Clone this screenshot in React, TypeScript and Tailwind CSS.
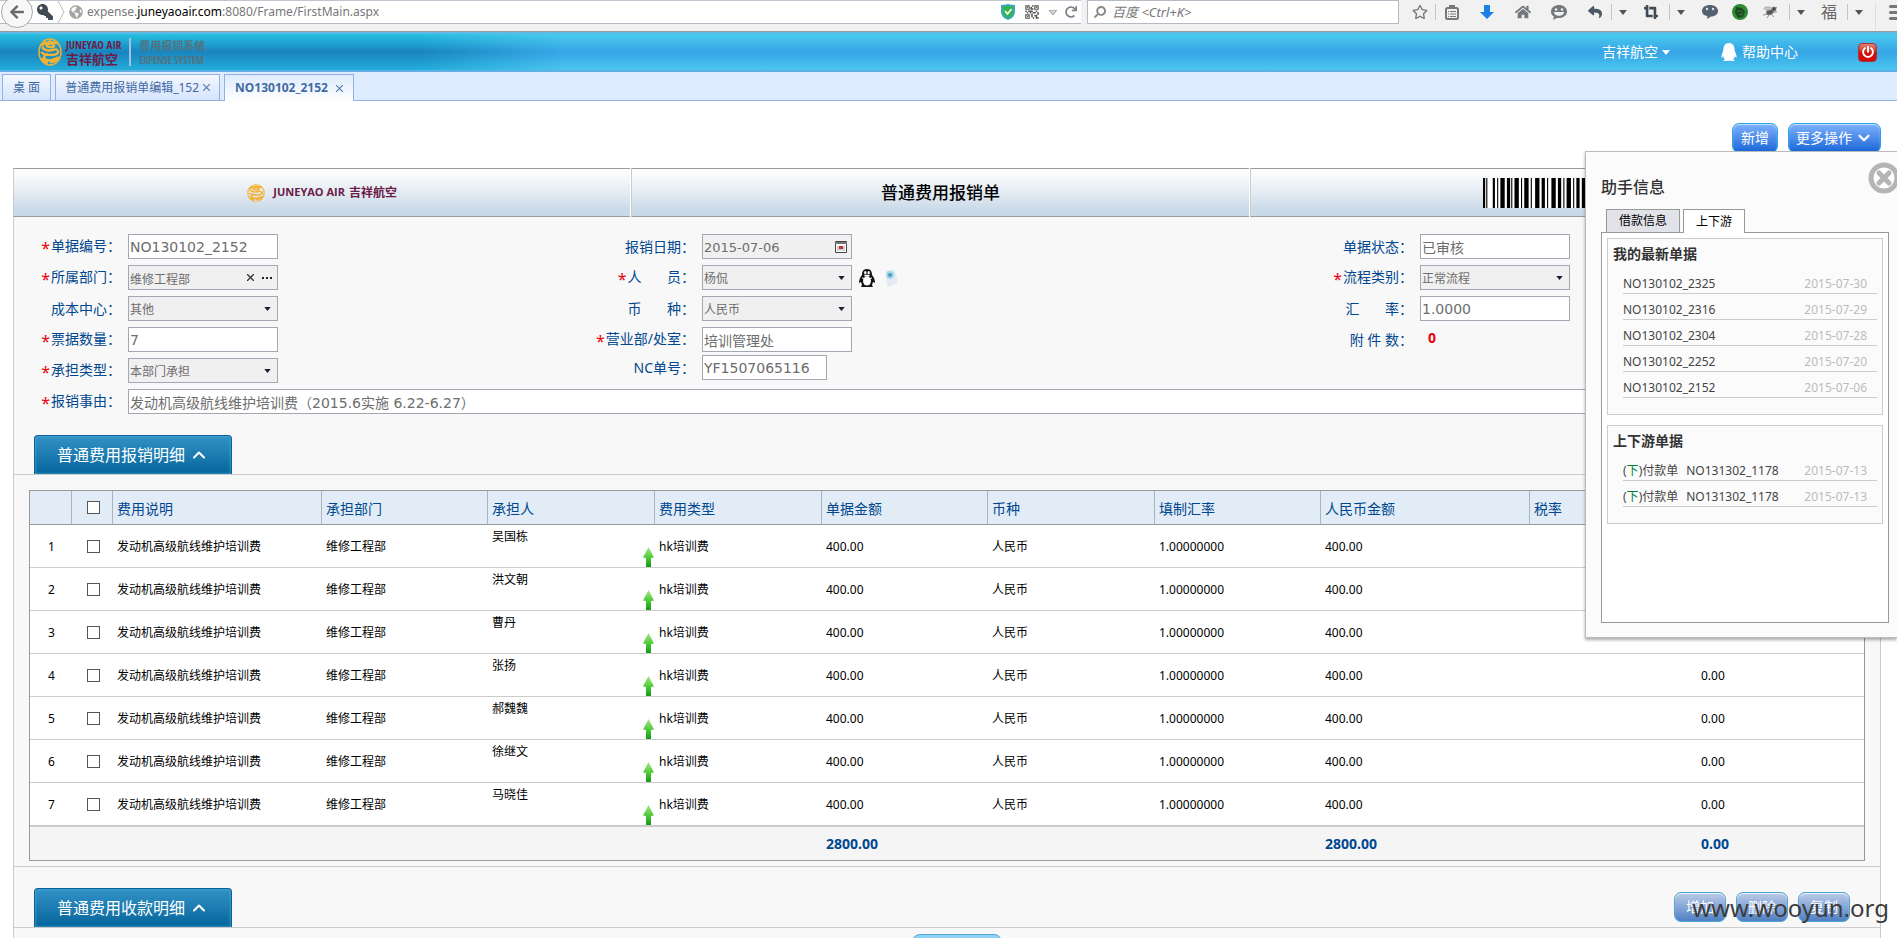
import { ChevronDown, ChevronUp } from 'lucide-react'
import { ReactNode } from 'react'
import {
  FaArrowLeft,
  FaCropAlt,
  FaGlobeAmericas,
  FaHome,
  FaKey,
  FaPowerOff,
  FaQq,
  FaRedo,
  FaRegStar,
  FaReply,
  FaSearch,
} from 'react-icons/fa'
import { MdQrCode2 } from 'react-icons/md'

const expenseRows = ['吴国栋', '洪文朝', '曹丹', '张扬', '郝魏魏', '徐继文', '马晓佳']

const columns = ['费用说明', '承担部门', '承担人', '费用类型', '单据金额', '币种', '填制汇率', '人民币金额', '税率', '']

const latestDocs = [
  { no: 'NO130102_2325', date: '2015-07-30' },
  { no: 'NO130102_2316', date: '2015-07-29' },
  { no: 'NO130102_2304', date: '2015-07-28' },
  { no: 'NO130102_2252', date: '2015-07-20' },
  { no: 'NO130102_2152', date: '2015-07-06' },
]

const relatedDocs = [
  { no: 'NO131302_1178', date: '2015-07-13' },
  { no: 'NO131302_1178', date: '2015-07-13' },
]

// bar, gap, bar, gap ... in module units
const barcode = [
  2, 1, 1, 5, 2, 2, 1, 2, 4, 2, 3, 1, 1, 2, 4, 2, 1, 2, 4, 2, 1, 3, 4, 2, 3, 2, 1, 3, 4, 2, 3, 2, 1, 2, 4, 2,
  1, 2, 3, 2, 4, 2, 2, 1, 1, 3, 4, 1, 2, 2, 1, 2, 4, 2, 1, 1, 3, 2, 1, 2, 4, 2, 2,
]

function Emblem({ className }: { className: string }) {
  return (
    <svg viewBox="0 0 24 28" preserveAspectRatio="none" className={className} fill="none" stroke="#f2b233" aria-hidden="true">
      <ellipse cx="12" cy="14" rx="11" ry="13" strokeWidth="1.5" />
      <path
        d="M19 6c-3-3-8-2-9 0 3-1 6 0 6 2s-6 1-8 0M4 9c2 3 6 4 10 3s5-1 6 1-2 4-6 4-8-1-8 2 4 4 8 3 5-3 7-2M3 14c2 2 4 3 7 2M4 20c1 2 3 4 6 5M8 4c-2 1-3 2-4 4M12 24c3 0 6-1 8-4M7 6c2 0 3-2 6-3"
        strokeWidth="2.4"
      />
    </svg>
  )
}

function ToolButton({ label, className, children }: { label: string; className: string; children: ReactNode }) {
  return (
    <button aria-label={label} className={`flex h-4 shrink-0 items-center justify-center ${className}`}>
      {children}
    </button>
  )
}

function Caret({ className = 'fill-[#555]' }: { className?: string }) {
  return (
    <svg viewBox="0 0 8 5" className={`h-[5px] w-2 shrink-0 ${className}`} aria-hidden="true">
      <path d="M0 0h8L4 5z" />
    </svg>
  )
}

function BrowserBar() {
  return (
    <div className="flex h-8 shrink-0 items-start border-b border-[#999] bg-[#f1f1f1]">
      <div className="flex h-6 min-w-0 flex-1 items-center border-y border-[#b4bbc5] border-t-[#c0c6d0] bg-white pr-1">
        <button
          aria-label="Back"
          className="ml-px flex size-8 shrink-0 items-center justify-center rounded-full border border-[#aaa] bg-[#f8f8f8]"
        >
          <FaArrowLeft className="size-4 text-[#686c70]" />
        </button>
        <FaKey className="ml-1 size-4 shrink-0 -scale-x-100 text-[#414b55]" />
        <svg viewBox="0 0 8 22" className="ml-1 h-[22px] w-2 fill-none stroke-[#bbb]" aria-hidden="true">
          <path d="M1 0l6 11-6 11" />
        </svg>
        <FaGlobeAmericas className="ml-1 size-[14px] shrink-0 text-[#a5a5a5]" />
        <span className="ml-1 truncate text-xs text-[#777]">
          expense.<span className="text-black">juneyaoair.com</span>:8080/Frame/FirstMain.aspx
        </span>
        <div className="ml-auto flex shrink-0 items-center gap-2">
          <svg viewBox="0 0 14 16" className="h-4 w-[14px]" aria-hidden="true">
            <path d="M0 1q4 0 7-1 3 1 7 1v7q0 5-7 8-7-3-7-8z" fill="#35a9c9" />
            <path d="M2 2.500q3 0 5-1 2 1 5 1V8q0 4-5 6-5-2-5-6z" fill="#36b44a" />
            <path d="M4 7l2.500 3L10.500 5" fill="none" stroke="#fff" strokeWidth="1.600" />
          </svg>
          <MdQrCode2 className="size-[18px] text-[#555]" />
          <Caret className="fill-[#d5d9de] stroke-[#999]" />
          <FaRedo className="size-3 text-[#7b8087]" />
        </div>
      </div>
      <div className="ml-1.5 flex h-6 w-[312px] items-center gap-1.5 border border-[#b4bbc5] bg-white px-1.5">
        <FaSearch className="size-3 -scale-x-100 text-[#888]" />
        <input
          aria-label="Search"
          placeholder="百度 <Ctrl+K>"
          className="min-w-0 flex-1 pt-px text-[13px] italic outline-none placeholder:text-[#777]"
        />
      </div>
      <div className="flex h-full w-[498px] shrink-0 items-start overflow-hidden pt-1 pl-1.5 text-[#74787d]">
        <ToolButton label="Bookmark" className="w-[30px]">
          <FaRegStar className="size-4" />
        </ToolButton>
        <ToolButton label="Bookmarks" className="w-8 border-l border-[#c4c4c4]">
          <svg viewBox="0 0 14 15" className="h-[15px] w-[14px] fill-none stroke-current">
            <rect x="1" y="3" width="12" height="11" rx="1.500" strokeWidth="2" />
            <path d="M4 1.500h6" strokeWidth="3" />
            <path d="M3 6.500h1M5 6.500h6M3 9h1M5 9h6M3 11.500h1M5 11.500h6" strokeWidth="1.200" />
          </svg>
        </ToolButton>
        <ToolButton label="Downloads" className="w-10">
          <svg viewBox="0 0 14 14" className="size-[14px] fill-[#1b7fe8]">
            <path d="M4 0h6v7h4l-7 7-7-7h4z" />
          </svg>
        </ToolButton>
        <ToolButton label="Home" className="w-8">
          <FaHome className="size-4" />
        </ToolButton>
        <ToolButton label="Chat" className="w-10">
          <svg viewBox="0 0 16 16" className="size-4">
            <path d="M8 1c4 0 8 2.500 8 6.500S12 14 8 14c-1 0-1.500 0-2 0l-4 2 1-3.500C1 11.500 0 10 0 7.500 0 3.500 4 1 8 1z" fill="currentColor" />
            <circle cx="5" cy="5.500" r="1.200" fill="#f1f1f1" />
            <circle cx="11" cy="5.500" r="1.200" fill="#f1f1f1" />
            <path d="M3 8h10c0 5-10 5-10 0z" fill="#f1f1f1" />
          </svg>
        </ToolButton>
        <ToolButton label="Undo" className="w-8">
          <FaReply className="size-[14px] text-[#4b5763]" />
        </ToolButton>
        <ToolButton label="Undo options" className="w-[22px] border-l border-[#c4c4c4]">
          <Caret />
        </ToolButton>
        <ToolButton label="Crop" className="w-9">
          <FaCropAlt className="size-[14px] text-[#414b55]" />
        </ToolButton>
        <ToolButton label="Crop options" className="w-[22px] border-l border-[#c4c4c4]">
          <Caret />
        </ToolButton>
        <ToolButton label="Messages" className="w-[38px]">
          <svg viewBox="0 0 16 16" className="size-4">
            <path d="M8 1c4 0 8 2 8 6s-4 5.500-7 5.500L5 15l.5-3C2 11.500 0 10 0 7c0-4 4-6 8-6z" fill="#536170" />
            <circle cx="5" cy="5" r="1.200" fill="#dfe5ea" />
            <circle cx="11" cy="5" r="1.200" fill="#dfe5ea" />
          </svg>
        </ToolButton>
        <ToolButton label="Privacy" className="w-[22px]">
          <svg viewBox="0 0 16 16" className="size-4">
            <circle cx="8" cy="8" r="8" fill="#2f8a34" />
            <path d="M4 3l6 1 3 4-2 5-5 1-3-5z" fill="#1c4a20" />
            <path d="M5 8c2-2 5-1 6 1M7 11l4-1" stroke="#3c7f40" fill="none" />
          </svg>
        </ToolButton>
        <ToolButton label="Firebug" className="w-[38px]">
          <svg viewBox="0 0 16 14" className="h-[14px] w-4 fill-none stroke-[#777]">
            <ellipse cx="8" cy="7" rx="3.500" ry="2.500" fill="#555" transform="rotate(-25 8 7)" />
            <ellipse cx="6" cy="3.500" rx="4" ry="1.500" fill="#ccc" stroke="#aaa" />
            <path d="M11 5l4-3M12 7h3M5 9l-4 1M7 10l-2 3M10 10l2 2" strokeWidth=".8" />
            <circle cx="12" cy="4" r="2" fill="#444" />
          </svg>
        </ToolButton>
        <ToolButton label="Firebug options" className="w-[22px] border-l border-[#c4c4c4]">
          <Caret />
        </ToolButton>
        <ToolButton label="Luck" className="w-9 text-base text-[#666]">
          福
        </ToolButton>
        <ToolButton label="Luck options" className="w-[22px] border-l border-[#c4c4c4]">
          <Caret />
        </ToolButton>
        <button aria-label="Menu" className="ml-1.5 flex h-[26px] w-8 shrink-0 flex-col gap-[3px] border-l border-[#ddd] pl-[13px]">
          <span className="mt-px h-[3px] w-full rounded bg-[#74787d]" />
          <span className="h-[3px] w-full rounded bg-[#74787d]" />
          <span className="h-[3px] w-full rounded bg-[#74787d]" />
        </button>
      </div>
    </div>
  )
}

function AppHeader() {
  return (
    <header className="relative flex h-10 shrink-0 items-center border-t-2 border-b-2 border-t-[#5cbbe6] border-b-[#5fb0e4] bg-linear-to-b from-[#4bcbee] from-0% via-[#36a5e6] via-50% to-[#49c6ee] to-100% pr-5 pl-[38px]">
      <div className="absolute inset-y-0 left-0 w-[560px] bg-linear-to-b from-[#27c1e0] via-[#1a84be] to-[#23addb] mask-r-from-75%" />
      <div className="relative flex items-center">
        <Emblem className="h-7 w-6" />
        <div className="ml-1 flex flex-col font-bold whitespace-nowrap text-[#6b1c48]">
          <span className="font-['Open_Sans_Condensed','Open_Sans',sans-serif] text-[11px] leading-[14px]">JUNEYAO AIR</span>
          <span className="text-[13px] leading-[14px]">吉祥航空</span>
        </div>
        <div className="mx-2 h-7 w-0.5 bg-[#9cc5dd]" />
        <div className="flex flex-col whitespace-nowrap text-[#50737f]">
          <span className="text-[11px] leading-4 font-bold">费用报销系统</span>
          <span className="font-['Open_Sans_Condensed','Open_Sans',sans-serif] text-[10px] leading-3 font-bold">
            EXPENSE SYSTEM
          </span>
        </div>
      </div>
      <nav className="relative ml-auto flex items-center text-sm text-white">
        <button className="mr-[50px] flex items-center gap-1">
          吉祥航空 <Caret className="fill-white" />
        </button>
        <a href="#help" className="mr-[60px] flex items-center gap-1">
          <FaQq className="size-[18px]" />
          帮助中心
        </a>
        <button
          aria-label="Log out"
          className="flex size-[19px] items-center justify-center rounded-sm border border-[#a33] bg-linear-to-b from-[#e08078] to-[#d00f0a] to-50%"
        >
          <FaPowerOff className="size-3" />
        </button>
      </nav>
    </header>
  )
}

function TabStrip() {
  const closed = 'flex h-full items-center border border-b-0 border-[#8db2e3] bg-linear-to-b from-[#f3f7ff] to-[#d6e4fb]'
  return (
    <div className="flex h-[29px] shrink-0 items-end gap-1 border-b border-[#8db2e3] bg-[#dfebff] pl-0.5 text-xs text-[#416aa3]">
      <div className="flex h-[26px] items-end gap-1">
        <button className={`${closed} px-2.5 whitespace-pre`}>桌 面</button>
        <button className={`${closed} gap-1 px-[9px]`}>
          <span>普通费用报销单编辑_152</span>
          <CloseMark />
        </button>
      </div>
      <button className="-mb-px flex h-[27px] items-center gap-2 border border-b-0 border-[#8db2e3] bg-linear-to-b from-[#deebfd] to-white px-2.5 font-bold">
        NO130102_2152
        <CloseMark />
      </button>
    </div>
  )
}

function CloseMark() {
  return (
    <svg viewBox="0 0 8 8" className="size-[7px] fill-none stroke-[#4a78b5]" aria-hidden="true">
      <path d="M0 0l8 8M8 0l-8 8" strokeWidth="1.200" />
    </svg>
  )
}

interface FieldProps {
  id: string
  label: string
  required?: boolean
  children: ReactNode
}

function Field({ id, label, required, children }: FieldProps) {
  return (
    <div className="flex h-[25px] items-center gap-[7px]">
      <label htmlFor={id} className="flex w-[107px] shrink-0 justify-end text-sm whitespace-pre text-[#00478f]">
        {required && <span className="pt-0.5 pr-px text-base leading-5 text-red-600">*</span>}
        {label}
      </label>
      {children}
    </div>
  )
}

const boxStyle = 'h-[25px] w-[150px] border border-[#a3a7b3] pl-px text-[#6d6d6d]'

function TextInput({ id, value, className = 'w-[150px]' }: { id: string; value: string; className?: string }) {
  return (
    <input
      id={id}
      defaultValue={value}
      className={`h-[25px] border border-[#a3a7b3] bg-white pl-px font-['DejaVu_Sans','Noto_Sans_CJK_SC',sans-serif] text-sm text-[#6d6d6d] ${className}`}
    />
  )
}

function SelectBox({ id, value }: { id: string; value: string }) {
  return (
    <div className={`${boxStyle} flex items-center bg-[#f0f0f0] pr-1.5`}>
      <select id={id} className="h-full min-w-0 flex-1 appearance-none pt-0.5 text-xs">
        <option>{value}</option>
      </select>
      <svg viewBox="0 0 8 5" className="h-1 w-[7px] fill-[#1c1c33]" aria-hidden="true">
        <path d="M0 0h8L4 5z" />
      </svg>
    </div>
  )
}

function ExpenseForm() {
  return (
    <form className="grid grid-cols-[574fr_718fr_574fr] pt-[17px]">
      <div className="flex flex-col gap-1.5">
        <Field id="docNo" label="单据编号：" required>
          <TextInput id="docNo" value="NO130102_2152" />
        </Field>
        <Field id="dept" label="所属部门：" required>
          <div className={`${boxStyle} flex items-center bg-[#f0f0f0] pr-[5px]`}>
            <input id="dept" defaultValue="维修工程部" className="h-full min-w-0 flex-1 pt-0.5 text-xs" />
            <button type="button" aria-label="Clear" className="px-2">
              <svg viewBox="0 0 8 8" className="size-[7px] fill-none stroke-[#333]">
                <path d="M0 0l8 8M8 0l-8 8" strokeWidth="1.500" />
              </svg>
            </button>
            <button type="button" aria-label="Browse" className="flex gap-[2px]">
              <span className="size-0.5 bg-[#222]" />
              <span className="size-0.5 bg-[#222]" />
              <span className="size-0.5 bg-[#222]" />
            </button>
          </div>
        </Field>
        <Field id="costCenter" label="成本中心：">
          <SelectBox id="costCenter" value="其他" />
        </Field>
        <Field id="ticketCount" label="票据数量：" required>
          <TextInput id="ticketCount" value="7" />
        </Field>
        <Field id="bearType" label="承担类型：" required>
          <SelectBox id="bearType" value="本部门承担" />
        </Field>
      </div>
      <div className="flex flex-col gap-1.5">
        <Field id="date" label="报销日期：">
          <div className={`${boxStyle} flex items-center bg-[#f0f0f0] pr-1`}>
            <input
              id="date"
              defaultValue="2015-07-06"
              className="h-full min-w-0 flex-1 pt-0.5 font-['DejaVu_Sans',sans-serif] text-[13px]"
            />
            <svg viewBox="0 0 12 12" className="size-3" aria-hidden="true">
              <path d="M.5 .5h11v11H.5z" fill="#fff" stroke="#444" />
              <path d="M0 2h12" stroke="#777" strokeWidth="2" />
              <path d="M3 5v5M5 5v5M7 5v5M9 5v5M2 6h8M2 8h8" stroke="#bbb" />
              <path d="M4 5h4v3H4z" fill="#c33" />
            </svg>
          </div>
        </Field>
        <Field id="person" label="人       员：" required>
          <SelectBox id="person" value="杨侃" />
          <PersonIcons />
        </Field>
        <Field id="currency" label="币       种：">
          <SelectBox id="currency" value="人民币" />
        </Field>
        <div className="flex flex-col gap-[3px]">
          <Field id="office" label="营业部/处室：" required>
            <TextInput id="office" value="培训管理处" />
          </Field>
          <Field id="ncNo" label="NC单号：">
            <TextInput id="ncNo" value="YF1507065116" className="w-[125px]" />
          </Field>
        </div>
      </div>
      <div className="flex flex-col gap-1.5">
        <Field id="status" label="单据状态：">
          <TextInput id="status" value="已审核" />
        </Field>
        <Field id="flow" label="流程类别：" required>
          <SelectBox id="flow" value="正常流程" />
        </Field>
        <Field id="rate" label="汇       率：">
          <TextInput id="rate" value="1.0000" />
        </Field>
        <Field id="attachments" label="附 件 数：">
          <output id="attachments" className="pb-1 pl-2 text-sm font-bold text-red-600">
            0
          </output>
        </Field>
      </div>
      <div className="col-span-3 mt-1.5 pr-4">
        <Field id="reason" label="报销事由：" required>
          <TextInput id="reason" value="发动机高级航线维护培训费（2015.6实施 6.22-6.27）" className="min-w-0 flex-1" />
        </Field>
      </div>
    </form>
  )
}

function PersonIcons() {
  return (
    <div className="flex items-center gap-2">
      <svg viewBox="0 0 16 18" className="h-[18px] w-4" aria-hidden="true">
        <path d="M8 0c4 0 5 3 5 6 2 2 3 5 3 8l-2-1-1 3 1 2H2l1-2-1-3-2 1c0-3 1-6 3-8 0-3 1-6 5-6z" fill="#111" />
        <ellipse cx="8" cy="12" rx="4" ry="4.500" fill="#fff" />
        <ellipse cx="6.300" cy="3.800" rx="1.200" ry="1.800" fill="#fff" />
        <ellipse cx="9.700" cy="3.800" rx="1.200" ry="1.800" fill="#fff" />
        <ellipse cx="8" cy="6.700" rx="3" ry="1" fill="#fff" />
        <path d="M3 9q5 2 10 0" stroke="#fff" fill="none" />
      </svg>
      <svg viewBox="0 0 16 18" className="h-[18px] w-4" aria-hidden="true">
        <path d="M3 2l8-2 4 11-11 7z" fill="#dceef6" />
        <circle cx="7" cy="6" r="4" fill="#a8d5e8" />
        <circle cx="7" cy="6" r="2" fill="#4d9cbc" />
        <path d="M5 12l8-3 2 5-10 4z" fill="#e4e9f2" />
      </svg>
    </div>
  )
}

function SectionBar({ title, children }: { title: string; children?: ReactNode }) {
  return (
    <div className="flex items-start border-b border-[#ccc] pt-[21px] pl-5">
      <button className="flex h-[39px] w-[198px] items-center justify-center gap-2 rounded-t border border-b-0 border-[#066299] bg-linear-to-b from-[#3192c6] to-[#01659b] text-base text-white inset-shadow-[0_0_3px_#5bb2dd]">
        {title}
        <ChevronUp className="-ml-1 size-5" strokeWidth={2.5} />
      </button>
      {children}
    </div>
  )
}

const headCell = 'h-[34px] border-b border-r border-b-[#999] border-r-[#aab4c0] last:border-r-0'
const cell = 'h-[43px] border-b border-[#ccc]'
const textCell = 'h-[43px] border-b border-[#ccc] pt-0.5 pl-1'
const checkbox = 'block mx-auto size-[13px] appearance-none border border-[#555] bg-white checked:bg-[#555]'

function ExpenseTable() {
  return (
    <div className="border-b border-[#ccc] px-[15px] pt-[15px] pb-[5px]">
      <table className="w-full table-fixed border-separate border-spacing-0 border border-[#999] bg-white text-left text-xs text-black">
        <colgroup>
          <col className="w-[42px]" />
          <col className="w-[41px]" />
          <col className="w-[209px]" />
          <col className="w-[166px]" />
          <col className="w-[167px]" />
          <col className="w-[167px]" />
          <col className="w-[166px]" />
          <col className="w-[167px]" />
          <col className="w-[166px]" />
          <col className="w-[209px]" />
          <col className="w-[167px]" />
          <col className="w-[167px]" />
        </colgroup>
        <thead className="bg-[#e2ecf6] text-sm text-[#00478f]">
          <tr>
            <th className={headCell} />
            <th className={`${headCell} pl-0.5`}>
              <input type="checkbox" aria-label="全选" className={checkbox} />
            </th>
            {columns.map((name, index) => (
              <th key={index} className={`${headCell} pt-0.5 pl-1 font-normal`}>
                {name}
              </th>
            ))}
          </tr>
        </thead>
        <tbody>
          {expenseRows.map((person, index) => (
            <tr key={person}>
              <td className={`${cell} pt-0.5 pl-px text-center`}>{index + 1}</td>
              <td className={`${cell} pl-0.5`}>
                <input type="checkbox" aria-label={person} className={checkbox} />
              </td>
              <td className={textCell}>发动机高级航线维护培训费</td>
              <td className={textCell}>维修工程部</td>
              <td className={`${cell} pl-1`}>
                <div className="flex h-[42px] items-end justify-between">
                  <span className="self-start pt-1">{person}</span>
                  <UpArrow />
                </div>
              </td>
              <td className={textCell}>hk培训费</td>
              <td className={textCell}>400.00</td>
              <td className={textCell}>人民币</td>
              <td className={textCell}>1.00000000</td>
              <td className={textCell}>400.00</td>
              <td className={cell} />
              <td className={textCell}>0.00</td>
            </tr>
          ))}
        </tbody>
        <tfoot className="bg-[#f5f5f5] text-sm font-bold text-[#00478f]">
          <tr>
            <td colSpan={6} className="h-[34px] border-t border-[#ccc]" />
            <td className="border-t border-[#ccc] pl-1">2800.00</td>
            <td colSpan={2} className="border-t border-[#ccc]" />
            <td className="border-t border-[#ccc] pl-1">2800.00</td>
            <td className="border-t border-[#ccc]" />
            <td className="border-t border-[#ccc] pl-1">0.00</td>
          </tr>
        </tfoot>
      </table>
    </div>
  )
}

function UpArrow() {
  return (
    <svg viewBox="0 0 11 20" className="mr-px h-5 w-[11px]" aria-hidden="true">
      <defs>
        <linearGradient id="arrowFill" x1="0" y1="0" x2="0" y2="1">
          <stop offset="0" stopColor="#a6e88a" />
          <stop offset="0.5" stopColor="#52cc3c" />
          <stop offset="1" stopColor="#149a18" />
        </linearGradient>
      </defs>
      <path d="M5.500 0L11 10.500 8 11v9H3v-9l-3-.5z" fill="url(#arrowFill)" />
    </svg>
  )
}

function Barcode() {
  const total = barcode.reduce((sum, width) => sum + width, 0)
  let x = 0
  return (
    <svg
      viewBox={`0 0 ${total} 30`}
      preserveAspectRatio="none"
      className="h-[30px] w-[152px]"
      aria-hidden="true"
    >
      <rect width={total} height="30" fill="#fff" />
      {barcode.map((width, index) => {
        const start = x
        x += width
        return index % 2 === 0 ? <rect key={index} x={start} width={width} height="30" /> : null
      })}
    </svg>
  )
}

const docHeadCell =
  'flex h-[49px] items-center justify-center border-y border-l border-y-[#999] border-l-[#ccc] bg-linear-to-b from-white via-[#e4ebf2] to-[#c8d9e8] to-90%'

function DocLine({ no, date, down }: { no: string; date: string; down?: boolean }) {
  return (
    <li className="flex h-[26px] items-end border-b border-[#ccc] pr-2.5 text-xs leading-[18px]">
      {down && (
        <span className="mr-2 text-[#444]">
          (<span className="text-green-700">下</span>)付款单
        </span>
      )}
      <a href={`#${no}`} className="text-[#444]">
        {no}
      </a>
      <span className="ml-auto text-[#bbb]">{date}</span>
    </li>
  )
}

function AssistantPanel() {
  return (
    <aside className="absolute top-[50px] right-0 h-[487px] w-[312px] border border-r-0 border-[#bbb] bg-[#fbfbfb] pt-[21px] pr-2 pl-[15px] shadow-[0_2px_3px_#0005]">
      <button aria-label="Close" className="absolute top-2.5 -right-[3px]">
        <svg viewBox="0 0 32 32" className="size-8">
          <circle cx="16" cy="16" r="13" fill="#fff" stroke="#b5b5b5" strokeWidth="5" />
          <path d="M11 11l10 10M21 11L11 21" stroke="#b5b5b5" strokeWidth="5" strokeLinecap="round" />
        </svg>
      </button>
      <h2 className="h-9 text-base leading-7 font-medium text-[#333]">助手信息</h2>
      <div className="flex gap-[3px] pl-[5px] text-xs text-black">
        <button className="h-[23px] border border-b-0 border-[#999] bg-[#e2e3e8] px-3">借款信息</button>
        <button className="z-10 -mb-px h-6 border border-b-0 border-[#999] bg-white px-3">上下游</button>
      </div>
      <div className="flex h-[391px] flex-col gap-2.5 border border-[#999] bg-white p-[5px]">
        <section className="h-[177px] border border-[#ccc] bg-[#fbfbfb] px-[5px] pt-[5px]">
          <h3 className="h-6 text-sm font-bold text-[#333]">我的最新单据</h3>
          <ul className="pl-2.5">
            {latestDocs.map((doc) => (
              <DocLine key={doc.no} {...doc} />
            ))}
          </ul>
        </section>
        <section className="h-[99px] border border-[#ccc] bg-[#fbfbfb] px-[5px] pt-[5px]">
          <h3 className="h-6 text-sm font-bold text-[#333]">上下游单据</h3>
          <ul className="pl-2.5">
            {relatedDocs.map((doc, index) => (
              <DocLine key={index} {...doc} down />
            ))}
          </ul>
        </section>
      </div>
    </aside>
  )
}

const blueButton =
  'flex h-[30px] items-center rounded-[7px] border border-[#28a4e8] bg-linear-to-b from-[#7db0fb] to-[#1466d8] text-sm text-white inset-shadow-[0_1px_1px_#c8e4ff]'
const paleButton =
  'h-[30px] w-[52px] rounded-[7px] border border-[#4da6cf] bg-linear-to-b from-[#bccbe8] to-[#4f80c2] text-sm text-white inset-shadow-[0_1px_1px_#e8f4ff]'

export default function App() {
  return (
    <div className="relative flex h-screen flex-col overflow-hidden bg-white font-['Noto_Sans','Noto_Sans_CJK_SC',sans-serif]">
      <BrowserBar />
      <AppHeader />
      <TabStrip />
      <main className="relative min-h-0 flex-1 overflow-hidden pt-[22px] pr-4 pl-[13px]">
        <div className="flex justify-end gap-2.5">
          <button className={`${blueButton} px-2`}>新增</button>
          <button className={`${blueButton} gap-[3px] px-[7px]`}>
            更多操作
            <ChevronDown className="size-[18px]" strokeWidth={3} />
          </button>
        </div>
        <div className="mt-[15px]">
          <div className="grid grid-cols-3 gap-px pr-3.5">
            <div className={docHeadCell}>
              <Emblem className="h-[18px] w-[18px]" />
              <span className="ml-2 font-['Open_Sans',sans-serif] text-[11px] font-bold text-[#6b1c48]">JUNEYAO AIR</span>
              <span className="ml-1 text-xs font-bold text-[#6b1c48]">吉祥航空</span>
            </div>
            <div className={docHeadCell}>
              <h1 className="text-[17px] font-medium text-black">普通费用报销单</h1>
            </div>
            <div className={docHeadCell}>
              <Barcode />
            </div>
          </div>
          <div className="border-x border-[#ccc] bg-[#f8f8f8]">
            <ExpenseForm />
            <SectionBar title="普通费用报销明细" />
            <ExpenseTable />
            <SectionBar title="普通费用收款明细">
              <div className="mt-1 mr-[30px] ml-auto flex gap-2.5">
                <button className={paleButton}>增加</button>
                <button className={paleButton}>删除</button>
                <button className={paleButton}>复制</button>
              </div>
            </SectionBar>
            <div className="flex justify-center pt-1.5 pl-5">
              <button aria-label="Expand" className="h-6 w-[90px] rounded-lg border border-[#4fa9dc] bg-[#8ed2f8]" />
            </div>
          </div>
        </div>
        <AssistantPanel />
      </main>
      <div className="pointer-events-none absolute right-2 bottom-3.5 text-2xl leading-8 text-[#3c3c3c]">www.wooyun.org</div>
    </div>
  )
}
